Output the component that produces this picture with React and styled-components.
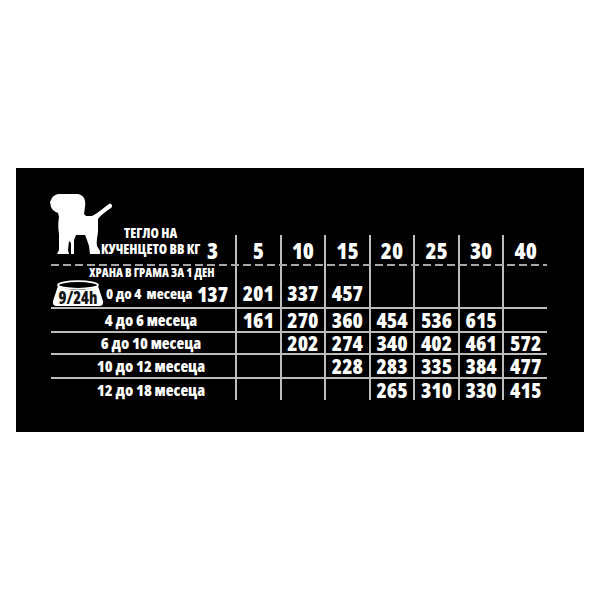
import React from "react";
import styled, { createGlobalStyle } from "styled-components";

const FONT = `"Open Sans", "Roboto", sans-serif`;
const LINE = "#bdbdbd";

const GlobalStyle = createGlobalStyle`
  body {
    margin: 0;
    background: #fff;
    font-family: ${FONT};
  }
`;

const Page = styled.div`
  padding: 168px 0 0 16px;
`;

const Panel = styled.div`
  width: 568px;
  height: 264px;
  box-sizing: border-box;
  background: #000;
  padding: 26px 0 0 35px;
  color: #fff;
  font-family: ${FONT};
  font-stretch: 75%;
  font-weight: 800;
`;

const Table = styled.div`
  width: 496px;
  display: flex;
  flex-direction: column;
`;

const Row = styled.div`
  display: grid;
  grid-template-columns: 139px 45px repeat(7, minmax(0, 1fr));
  height: ${(p) => p.$h}px;
  box-sizing: border-box;
  align-items: ${(p) => (p.$bottom ? "end" : "stretch")};
  border-top: ${(p) => (p.$line === "solid" ? `2px solid ${LINE}` : "none")};
  padding-top: ${(p) => (p.$line === "dashed" ? "2px" : "0")};
  background: ${(p) =>
    p.$line === "dashed"
      ? `repeating-linear-gradient(90deg, #a8a8a8 0 8px, transparent 8px 12px) top left / 100% 2px no-repeat`
      : "none"};
`;

const Value = styled.div`
  display: flex;
  align-items: center;
  justify-content: center;
  box-sizing: border-box;
  height: ${(p) => (p.$h ? `${p.$h}px` : "auto")};
  width: ${(p) => (p.$w ? `${p.$w}px` : "auto")};
  flex: none;
  padding-top: ${(p) => p.$offset || 0}px;
  border-left: ${(p) => (p.$sep ? `2px solid ${LINE}` : "none")};
  font-size: ${(p) => (p.$head ? 22.5 : 21)}px;
  line-height: 18px;
`;

const HeadLabel = styled.div`
  display: flex;
  align-items: flex-end;
  height: 100%;
`;

const Dog = styled.svg`
  width: 62px;
  height: 62px;
  flex: none;
  margin-bottom: 10px;
  margin-left: -1px;
`;

const HeadText = styled.div`
  width: 100px;
  margin-left: -11px;
  margin-bottom: 9px;
  text-align: center;
  white-space: nowrap;
  font-size: 13.5px;
  line-height: 16px;
`;

const FeedLabel = styled.div`
  grid-column: span 2;
  display: flex;
  flex-direction: column;
`;

const Caption = styled.div`
  padding-left: 18px;
  text-align: center;
  font-size: 12px;
  line-height: 14px;
  white-space: nowrap;
`;

const FeedLine = styled.div`
  display: flex;
  align-items: center;
  height: 27px;
`;

const Bowl = styled.svg`
  width: 54px;
  height: 27px;
  flex: none;
`;

const AgeInline = styled.span`
  flex: 1;
  min-width: 0;
  font-size: 14.5px;
  white-space: pre;
  margin-left: 1px;
`;

const AgeLabel = styled.div`
  grid-column: span 2;
  display: flex;
  align-items: center;
  justify-content: center;
  padding-left: 16px;
  font-size: 16px;
  line-height: 18px;
  white-space: nowrap;
`;

const weights = [5, 10, 15, 20, 25, 30, 40];

const rows = [
  { label: "4 до 6 месеца", h: 24, vals: [161, 270, 360, 454, 536, 615, ""] },
  { label: "6 до 10 месеца", h: 22, vals: ["", 202, 274, 340, 402, 461, 572] },
  { label: "10 до 12 месеца", h: 24, vals: ["", "", 228, 283, 335, 384, 477] },
  { label: "12 до 18 месеца", h: 23, vals: ["", "", "", 265, 310, 330, 415] },
];

const DogIcon = () => (
  <Dog viewBox="4 4 62 62">
    <path
      fill="#fff"
      d="M6 8 C9 3 17 3 24 3 L32 4 C38 5 40 10 39 17 L38 24 L40 26 L46 26
         C52 23 57 18 63 14 C66 13 67 16 65 18 C60 21 55 25 52 29 L52 40
         C52 46 50 50 51 56 L54 61 L54 64 L44 64 L43 56 L41 50 L39 45 L30 45
         L28 50 L28 64 L25 64 L25 53 L23 51 L22 60 L23 64 L11 64 L13 60 L13 44
         C12 38 12 32 13 27 L12 23 C9 22 6 20 5 17 L4 12 Z"
    />
  </Dog>
);

const BowlIcon = () => (
  <Bowl viewBox="0 0 54 27">
    <path fill="#fff" d="M7 6 Q27 14 47 6 L52 21 Q53 26 48 26 L6 26 Q1 26 2 21 Z" />
    <ellipse cx="27" cy="5" rx="20" ry="3.8" fill="#000" stroke="#fff" strokeWidth="1.8" />
    <text
      x="27"
      y="23.5"
      textAnchor="middle"
      fontFamily={FONT}
      fontWeight="800"
      fontSize="17"
      fill="#141414"
      textLength="39"
      lengthAdjust="spacingAndGlyphs"
      style={{ fontStretch: "75%" }}
    >
      9/24h
    </text>
  </Bowl>
);

export default function App() {
  return (
    <Page>
      <GlobalStyle />
      <Panel>
        <Table>
          <Row $h={70} $bottom>
            <HeadLabel>
              <DogIcon />
              <HeadText>
                ТЕГЛО НА
                <br />
                КУЧЕНЦЕТО ВВ КГ
              </HeadText>
            </HeadLabel>
            <Value $head $h={31}>3</Value>
            {weights.map((w) => (
              <Value key={w} $head $h={31} $sep>
                {w}
              </Value>
            ))}
          </Row>

          <Row $h={43} $line="dashed">
            <FeedLabel>
              <Caption>ХРАНА В ГРАМА ЗА 1 ДЕН</Caption>
              <FeedLine>
                <BowlIcon />
                <AgeInline>{"0 до 4  месеца"}</AgeInline>
                <Value $w={45}>137</Value>
              </FeedLine>
            </FeedLabel>
            {[201, 337, 457, "", "", "", ""].map((v, i) => (
              <Value key={i} $sep $offset={12}>
                {v}
              </Value>
            ))}
          </Row>

          {rows.map((r) => (
            <Row key={r.label} $h={r.h} $line="solid">
              <AgeLabel>{r.label}</AgeLabel>
              {r.vals.map((v, i) => (
                <Value key={i} $sep>
                  {v}
                </Value>
              ))}
            </Row>
          ))}
        </Table>
      </Panel>
    </Page>
  );
}
